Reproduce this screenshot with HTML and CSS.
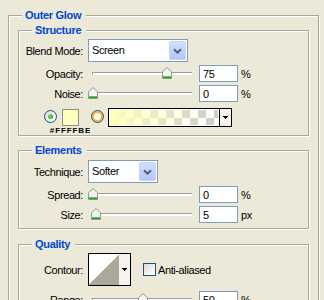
FILE: index.html
```html
<!DOCTYPE html>
<html lang="en">

<head>
    <meta charset="UTF-8">
    <title>Outer Glow</title>
    <link rel="stylesheet" href="styles.css">
</head>

<body>
    <fieldset class="group outer">
        <legend>Outer Glow</legend>

        <!-- Structure -->
        <fieldset class="group inner structure">
            <legend>Structure</legend>
            <div class="row">
                <span class="name">Blend Mode:</span>
                <div class="combo wide">
                    <span class="combo-text">Screen</span>
                    <span class="combo-btn"><svg width="9" height="6" viewBox="0 0 9 6"><path d="M1 1.2L4.5 4.7L8 1.2" fill="none" stroke="#4d6185" stroke-width="2"/></svg></span>
                </div>
            </div>
            <div class="row">
                <span class="name">Opacity:</span>
                <div class="slider">
                    <div class="track">
                        <svg class="thumb" style="left:75%" width="10" height="12" viewBox="0 0 10 12"><path d="M0.5 11.5V4.7L5 0.6L9.5 4.7V11.5Z" fill="#f3f3ef" stroke="#8d9a8d"/><rect x="1" y="9" width="8" height="1" fill="#5ac85a"/><rect x="1" y="10" width="8" height="1" fill="#21a121"/></svg>
                    </div>
                </div>
                <input class="num" type="text" value="75">
                <span class="unit">%</span>
            </div>
            <div class="row">
                <span class="name">Noise:</span>
                <div class="slider">
                    <div class="track">
                        <svg class="thumb" style="left:0%" width="10" height="12" viewBox="0 0 10 12"><path d="M0.5 11.5V4.7L5 0.6L9.5 4.7V11.5Z" fill="#f3f3ef" stroke="#8d9a8d"/><rect x="1" y="9" width="8" height="1" fill="#5ac85a"/><rect x="1" y="10" width="8" height="1" fill="#21a121"/></svg>
                    </div>
                </div>
                <input class="num" type="text" value="0">
                <span class="unit">%</span>
            </div>
            <div class="row colors">
                <span class="radio first on"></span>
                <div class="swatch-col">
                    <span class="swatch"></span>
                    <span class="hex">#FFFFBE</span>
                </div>
                <span class="radio second hot"></span>
                <div class="grad">
                    <span class="grad-fill"></span>
                    <span class="drop"><svg class="caret" width="5" height="3" viewBox="0 0 5 3"><rect x="0" y="0" width="5" height="1"/><rect x="1" y="1" width="3" height="1"/><rect x="2" y="2" width="1" height="1"/></svg></span>
                </div>
            </div>
        </fieldset>

        <!-- Elements -->
        <fieldset class="group inner elements">
            <legend>Elements</legend>
            <div class="row">
                <span class="name">Technique:</span>
                <div class="combo short">
                    <span class="combo-text">Softer</span>
                    <span class="combo-btn"><svg width="9" height="6" viewBox="0 0 9 6"><path d="M1 1.2L4.5 4.7L8 1.2" fill="none" stroke="#4d6185" stroke-width="2"/></svg></span>
                </div>
            </div>
            <div class="row">
                <span class="name">Spread:</span>
                <div class="slider">
                    <div class="track">
                        <svg class="thumb" style="left:0%" width="10" height="12" viewBox="0 0 10 12"><path d="M0.5 11.5V4.7L5 0.6L9.5 4.7V11.5Z" fill="#f3f3ef" stroke="#8d9a8d"/><rect x="1" y="9" width="8" height="1" fill="#5ac85a"/><rect x="1" y="10" width="8" height="1" fill="#21a121"/></svg>
                    </div>
                </div>
                <input class="num" type="text" value="0">
                <span class="unit">%</span>
            </div>
            <div class="row">
                <span class="name">Size:</span>
                <div class="slider">
                    <div class="track">
                        <svg class="thumb" style="left:3%" width="10" height="12" viewBox="0 0 10 12"><path d="M0.5 11.5V4.7L5 0.6L9.5 4.7V11.5Z" fill="#f3f3ef" stroke="#8d9a8d"/><rect x="1" y="9" width="8" height="1" fill="#5ac85a"/><rect x="1" y="10" width="8" height="1" fill="#21a121"/></svg>
                    </div>
                </div>
                <input class="num" type="text" value="5">
                <span class="unit">px</span>
            </div>
        </fieldset>

        <!-- Quality -->
        <fieldset class="group inner quality">
            <legend>Quality</legend>
            <div class="row">
                <span class="name">Contour:</span>
                <div class="contour">
                    <span class="curve"></span>
                    <span class="drop"><svg class="caret" width="5" height="3" viewBox="0 0 5 3"><rect x="0" y="0" width="5" height="1"/><rect x="1" y="1" width="3" height="1"/><rect x="2" y="2" width="1" height="1"/></svg></span>
                </div>
                <span class="check"></span>
                <span>Anti-aliased</span>
            </div>
            <div class="row range">
                <span class="name">Range:</span>
                <div class="slider">
                    <div class="track">
                        <svg class="thumb" style="left:50%" width="10" height="12" viewBox="0 0 10 12"><path d="M0.5 11.5V4.7L5 0.6L9.5 4.7V11.5Z" fill="#f3f3ef" stroke="#8d9a8d"/><rect x="1" y="9" width="8" height="1" fill="#5ac85a"/><rect x="1" y="10" width="8" height="1" fill="#21a121"/></svg>
                    </div>
                </div>
                <input class="num" type="text" value="50">
                <span class="unit">%</span>
            </div>
            <div class="row">
                <span class="name">Jitter:</span>
                <div class="slider">
                    <div class="track">
                        <svg class="thumb" style="left:0%" width="10" height="12" viewBox="0 0 10 12"><path d="M0.5 11.5V4.7L5 0.6L9.5 4.7V11.5Z" fill="#f3f3ef" stroke="#8d9a8d"/><rect x="1" y="9" width="8" height="1" fill="#5ac85a"/><rect x="1" y="10" width="8" height="1" fill="#21a121"/></svg>
                    </div>
                </div>
                <input class="num" type="text" value="0">
                <span class="unit">%</span>
            </div>
        </fieldset>
    </fieldset>
</body>

</html>
```

FILE: styles.css
```css
* {
    box-sizing: border-box;
}

body {
    margin: 0;
    background-color: #ece9d8;
    font-family: "Liberation Sans", Arial, sans-serif;
    font-size: 11px;
    letter-spacing: -0.4px;
    color: #000000;
    overflow: hidden;
}

/* Etched group boxes */
.group {
    margin: 0;
    padding: 0;
    min-width: 0;
    border: 1px solid #aca899;
    box-shadow: inset 1px 1px 0 #ffffff, 1px 1px 0 #ffffff;
}

.group > legend {
    padding: 0 5px 0 3px;
    line-height: 13px;
    font-weight: bold;
    letter-spacing: -0.3px;
    color: #0046d5;
    background-color: #ece9d8;
}

.outer {
    margin: 9px 5px 0 8px;
    padding: 2px 9px 0;
}

.outer > legend {
    margin-left: 4px;
}

.inner > legend {
    margin-left: 13px;
}

.structure {
    padding-top: 2px;
}

.elements {
    margin-top: 8px;
    padding: 3px 0 5px;
}

.quality {
    margin-top: 9px;
    padding: 2px 0 6px;
}

/* Rows */
.row {
    display: flex;
    align-items: center;
}

.row + .row {
    margin-top: 3px;
}

.name {
    flex: none;
    width: 64px;
    margin-right: 5px;
    text-align: right;
}

/* Combo boxes */
.combo {
    display: flex;
    height: 23px;
    border: 1px solid #7f9db9;
    background-color: #ffffff;
}

.combo.wide {
    width: 100px;
}

.combo.short {
    width: 70px;
}

.combo-text {
    flex: 1;
    padding-left: 3px;
    line-height: 21px;
}

.combo-btn {
    display: flex;
    align-items: center;
    justify-content: center;
    width: 17px;
    margin: 1px;
    border: 1px solid #c6d5fc;
    border-radius: 2px;
    background: linear-gradient(#d3dffd, #b3c7f6);
}

/* Sliders */
.slider {
    flex: none;
    width: 100px;
    margin-left: 4px;
}

.track {
    position: relative;
    height: 3px;
    border-left: 1px solid #9d9d9d;
    background: linear-gradient(#9d9d9d 1px, #ffffff 1px);
}

.thumb {
    position: absolute;
    top: -5px;
    margin-left: -5px;
}

.num {
    width: 39px;
    height: 17px;
    margin: 0 0 0 7px;
    padding: 0 0 0 3px;
    border: 1px solid #7f9db9;
    background-color: #ffffff;
    font: inherit;
    letter-spacing: inherit;
    color: #000000;
}

.unit {
    margin-left: 3px;
}

/* Colour / gradient row */
.row.colors {
    margin-top: 6px;
    align-items: flex-start;
}

.radio {
    flex: none;
    display: flex;
    align-items: center;
    justify-content: center;
    width: 13px;
    height: 13px;
    margin-top: 2px;
    border: 1px solid #1c5180;
    border-radius: 50%;
    background: linear-gradient(135deg, #dcdcd7, #ffffff);
}

.radio.first {
    margin-left: 25px;
}

.radio.second {
    margin-left: 12px;
}

.radio.on::before {
    content: "";
    width: 5px;
    height: 5px;
    border-radius: 50%;
    background: radial-gradient(circle at 35% 35%, #6fdc6f, #1e9a1e);
}

.radio.hot {
    background: #fffdf2;
    box-shadow: inset 0 0 0 2px #f7b53b;
}

.swatch-col {
    flex: none;
    display: flex;
    flex-direction: column;
    align-items: center;
    width: 17px;
    margin-left: 5px;
}

.swatch {
    width: 17px;
    height: 17px;
    margin-top: 1px;
    border: 1px solid #8e8f8f;
    background-color: #ffffbe;
}

.hex {
    margin-top: 1px;
    line-height: 8px;
    font-size: 8px;
    font-weight: bold;
    letter-spacing: 0.9px;
    white-space: nowrap;
}

.grad {
    flex: none;
    display: flex;
    width: 124px;
    height: 19px;
    margin-left: 4px;
    border: 1px solid #000000;
}

.grad-fill {
    flex: 1;
    border: 1px solid #ffffff;
    background:
        linear-gradient(to right, #ffffbe, rgba(255, 255, 190, 0)),
        conic-gradient(#cccccc 90deg, #ffffff 90deg 180deg, #cccccc 180deg 270deg, #ffffff 270deg) 0 0 / 16px 16px;
}

.drop {
    display: flex;
    align-items: center;
    justify-content: center;
    background-color: #f4f3ee;
}

.grad .drop {
    width: 12px;
    border-left: 1px solid #000000;
}

.caret {
    fill: #000000;
}

/* Quality */
.contour {
    flex: none;
    display: flex;
    width: 43px;
    height: 33px;
    border: 1px solid #000000;
    background-color: #f4f3ee;
}

.curve {
    width: 30px;
    background: linear-gradient(to top left, #aca899 50%, #ffffff 50%);
}

.contour .drop {
    flex: 1;
}

.check {
    flex: none;
    width: 13px;
    height: 13px;
    margin: 0 2px 0 12px;
    border: 1px solid #1c5180;
    background: linear-gradient(135deg, #dcdcd7, #ffffff);
}

.row.range {
    margin-top: 5px;
}
```
